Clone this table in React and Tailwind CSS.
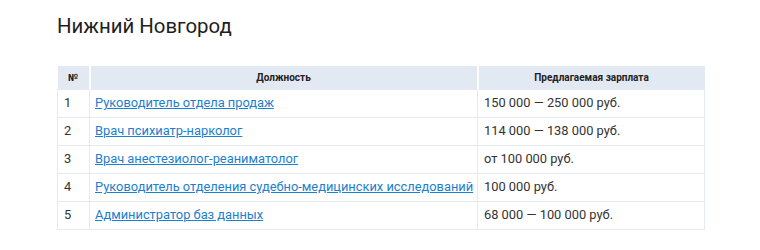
import React from 'react'

const rows = [
  { n: 1, title: 'Руководитель отдела продаж', pay: '150 000 — 250 000 руб.' },
  { n: 2, title: 'Врач психиатр-нарколог', pay: '114 000 — 138 000 руб.' },
  { n: 3, title: 'Врач анестезиолог-реаниматолог', pay: 'от 100 000 руб.' },
  { n: 4, title: 'Руководитель отделения судебно-медицинских исследований', pay: '100 000 руб.' },
  { n: 5, title: 'Администратор баз данных', pay: '68 000 — 100 000 руб.' },
]

const App = () => {
  return (
    <div className="w-[760px] h-[250px] bg-white pl-[57px] pt-[12px] font-['Roboto',sans-serif] text-[#222]">
      <h1 className="text-[20.4px] leading-[28px] font-normal text-[#1e1e1e] mb-[26px]">Нижний Новгород</h1>
      <table className="w-[647px] border-collapse table-fixed text-[12.85px] text-[#333]">
        <colgroup>
          <col className="w-[32px]" />
          <col className="w-[388px]" />
          <col className="w-[227px]" />
        </colgroup>
        <thead>
          <tr className="bg-[#e3e9f3] h-[23px] text-[10px] font-bold text-[#222]">
            <th className="border-r-2 border-white text-center">№</th>
            <th className="border-r-2 border-white text-center">Должность</th>
            <th className="text-center">Предлагаемая зарплата</th>
          </tr>
        </thead>
        <tbody>
          {rows.map((r) => (
            <tr key={r.n} className="h-[28px]">
              <td className="border border-[#e4eaf4] pl-[6px]">{r.n}</td>
              <td className="border border-[#e4eaf4] pl-[5px]">
                <a href="#" className="text-[#1b80cf] underline whitespace-nowrap">{r.title}</a>
              </td>
              <td className="border border-[#e4eaf4] pl-[6px]">{r.pay}</td>
            </tr>
          ))}
        </tbody>
      </table>
    </div>
  )
}

export default App
